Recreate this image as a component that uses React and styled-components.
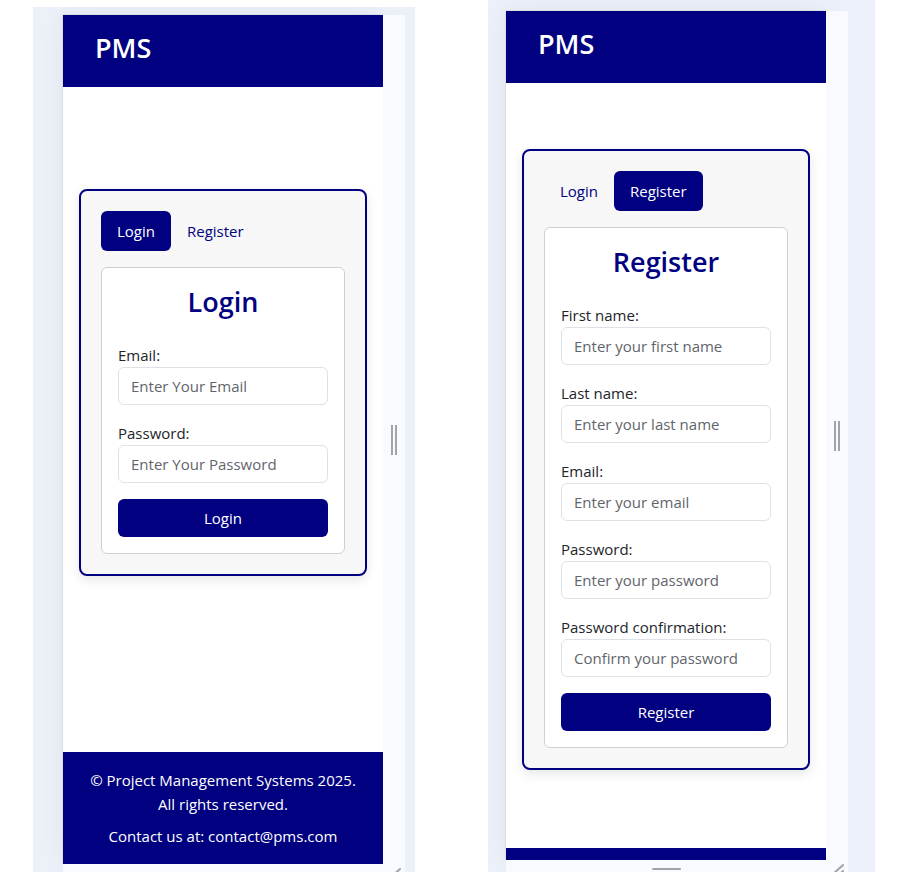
import React, { useId } from "react";
import styled, { createGlobalStyle } from "styled-components";

const navy = "#000080";

const GlobalStyle = createGlobalStyle`
  *, *::before, *::after { box-sizing: border-box; }
  body {
    margin: 0;
    background: #fff;
    color: #212529;
    font-family: "Segoe UI", "Open Sans", "Noto Sans", sans-serif;
    font-size: 15px;
    line-height: 24px;
  }
`;

const Page = styled.div`
  display: grid;
  grid-template-columns: 382fr 387fr;
  gap: 73px;
  min-height: 100vh;
  padding: 0 25px 4px 33px;
`;

const Frame = styled.section`
  display: grid;
  grid-template-columns: minmax(0, 1fr) 22px;
  grid-template-rows: 1fr ${(p) => p.$bar}px;
  margin-top: ${(p) => p.$top}px;
  padding: ${(p) => p.$pad};
  background: #ebf0f9;
  overflow: hidden;
`;

const Screen = styled.div`
  display: flex;
  flex-direction: column;
  background: #fff;
  box-shadow: 0 0 1px rgba(0, 0, 0, 0.3), 0 0 24px rgba(0, 0, 0, 0.06);
`;

const Rail = styled.div`
  display: flex;
  align-items: center;
  justify-content: center;
  gap: 2px;
  z-index: 1;
  background: #f8faff;
`;

const RailLine = styled.span`
  width: 2px;
  height: 30px;
  background: #a3a3a3;
`;

const BottomBar = styled.div`
  display: grid;
  grid-template-columns: 1fr 22px;
  grid-column: 1 / -1;
  z-index: 1;
  background: #f8faff;
  overflow: hidden;
`;

const BottomGrip = styled.span`
  justify-self: center;
  align-self: start;
  width: 29px;
  height: 2px;
  margin-top: 8px;
  border-radius: 1px;
  background: #a3a3a3;
`;

const CornerGrip = styled.svg`
  display: block;
  width: 22px;
  height: 22px;
`;

const Header = styled.header`
  height: 72px;
  padding: 16px 32px;
  background: ${navy};
`;

const Brand = styled.a`
  display: inline-block;
  color: #fff;
  font-size: 27px;
  font-weight: 600;
  line-height: 34px;
  text-decoration: none;
`;

const Main = styled.main`
  flex: 1;
  padding: ${(p) => p.$top}px 16px 0;
`;

const Card = styled.div`
  padding: 20px;
  border: 2px solid ${navy};
  border-radius: 8px;
  background: #f7f7f7;
  box-shadow: 0 4px 12px rgba(0, 0, 0, 0.1);
`;

const Tabs = styled.nav`
  display: flex;
  margin-bottom: 16px;
`;

const Tab = styled.button`
  height: 40px;
  padding: 8px 16px;
  border: 0;
  border-radius: 6px;
  background: ${(p) => (p.$active ? navy : "transparent")};
  color: ${(p) => (p.$active ? "#fff" : navy)};
  font: inherit;
  cursor: pointer;
`;

const Form = styled.form`
  padding: 16px;
  border: 1px solid #d0d0d0;
  border-radius: 6px;
  background: #fff;
`;

const Title = styled.h2`
  margin: 0 0 23px;
  color: ${navy};
  font-size: 27px;
  font-weight: 600;
  line-height: 36px;
  text-align: center;
`;

const FieldGroup = styled.div`
  margin-bottom: 16px;
`;

const Label = styled.label`
  display: block;
`;

const Input = styled.input`
  display: block;
  width: 100%;
  height: 38px;
  padding: 6px 12px;
  border: 1px solid #dee2e6;
  border-radius: 6px;
  background: #fff;
  color: #212529;
  font: inherit;
  &::placeholder { color: #5f656b; opacity: 1; }
`;

const Submit = styled.button`
  display: block;
  width: 100%;
  height: 38px;
  border: 0;
  border-radius: 6px;
  background: ${navy};
  color: #fff;
  font: inherit;
  cursor: pointer;
`;

const Footer = styled.footer`
  padding: 16px 24px;
  background: ${navy};
  color: #fff;
  text-align: center;
`;

const FooterEdge = styled.footer`
  height: 12px;
  background: ${navy};
`;

const FooterText = styled.p`
  margin: 0;
  & + & { margin-top: 8px; }
`;

function Field({ label, placeholder, type = "text" }) {
  const id = useId();
  return (
    <FieldGroup>
      <Label htmlFor={id}>{label}</Label>
      <Input id={id} type={type} placeholder={placeholder} />
    </FieldGroup>
  );
}

function Device({ top, pad, bar, mainTop, active, fields, grip, children }) {
  return (
    <Frame $top={top} $pad={pad} $bar={bar}>
      <Screen>
        <Header><Brand href="#">PMS</Brand></Header>
        <Main $top={mainTop}>
          <Card>
            <Tabs>
              {["Login", "Register"].map((name) => (
                <Tab key={name} type="button" $active={name === active}>{name}</Tab>
              ))}
            </Tabs>
            <Form onSubmit={(e) => e.preventDefault()}>
              <Title>{active}</Title>
              {fields.map((f) => <Field key={f.label} {...f} />)}
              <Submit type="submit">{active}</Submit>
            </Form>
          </Card>
        </Main>
        {children}
      </Screen>
      <Rail><RailLine /><RailLine /></Rail>
      <BottomBar>
        {grip ? <BottomGrip /> : <span />}
        <CornerGrip viewBox="0 0 22 22" fill="none" stroke="#a3a3a3" strokeWidth="2" strokeLinecap="round">
          <path d="M6 15 L17 5 M13 15 L17 11" />
        </CornerGrip>
      </BottomBar>
    </Frame>
  );
}

const loginFields = [
  { label: "Email:", placeholder: "Enter Your Email", type: "email" },
  { label: "Password:", placeholder: "Enter Your Password", type: "password" },
];

const registerFields = [
  { label: "First name:", placeholder: "Enter your first name" },
  { label: "Last name:", placeholder: "Enter your last name" },
  { label: "Email:", placeholder: "Enter your email", type: "email" },
  { label: "Password:", placeholder: "Enter your password", type: "password" },
  { label: "Password confirmation:", placeholder: "Confirm your password", type: "password" },
];

export default function App() {
  return (
    <>
      <GlobalStyle />
      <Page>
        <Device top={7} pad="8px 10px 0 30px" bar={8} mainTop={102} active="Login" fields={loginFields}>
          <Footer>
            <FooterText>© Project Management Systems 2025. All rights reserved.</FooterText>
            <FooterText>Contact us at: contact@pms.com</FooterText>
          </Footer>
        </Device>
        <Device top={0} pad="11px 27px 0 18px" bar={12} mainTop={66} active="Register" fields={registerFields} grip>
          <FooterEdge />
        </Device>
      </Page>
    </>
  );
}
